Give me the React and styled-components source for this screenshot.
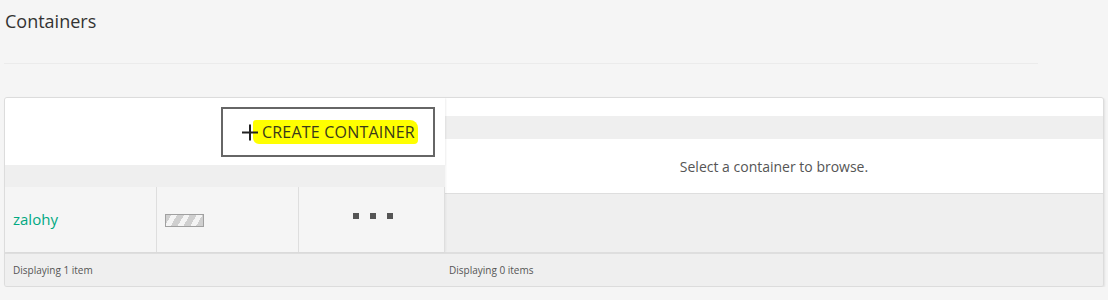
import React from "react";
import styled, { createGlobalStyle } from "styled-components";

const Global = createGlobalStyle`
  html, body {
    margin: 0;
    padding: 0;
    background: #f5f5f5;
    font-family: "Open Sans", "Noto Sans", sans-serif;
    color: #333;
  }
`;

const Page = styled.div`
  padding: 0 4px;
`;

const Title = styled.h1`
  margin: 0;
  padding: 9px 1px 0;
  height: 30px;
  font-size: 18px;
  font-weight: 400;
  color: #333;
`;

const Rule = styled.hr`
  margin: 24px 0 33px;
  width: 1034px;
  border: none;
  border-top: 1px solid #ebebeb;
`;

const Panel = styled.div`
  width: 1098px;
  border: 1px solid #dcdcdc;
  border-radius: 3px;
  background: #efefef;
  box-shadow: 1px 1px 2px rgba(0, 0, 0, 0.08);
  overflow: hidden;
`;

const Body = styled.div`
  display: flex;
`;

const Left = styled.div`
  width: 440px;
  display: flex;
  flex-direction: column;
  box-shadow: 1px 0 2px rgba(0, 0, 0, 0.05);
  z-index: 1;
`;

const Toolbar = styled.div`
  height: 67px;
  background: #fff;
  display: flex;
  justify-content: flex-end;
  align-items: flex-start;
  padding: 9px 10px 0 0;
  box-sizing: border-box;
  box-shadow: 0 1px 2px rgba(0, 0, 0, 0.06);
`;

const CreateButton = styled.button`
  width: 214px;
  height: 50px;
  border: 2px solid #666;
  background: #fff;
  display: flex;
  align-items: center;
  padding: 0 0 0 18px;
  box-sizing: border-box;
  font-family: inherit;
  cursor: pointer;
`;

const Plus = styled.svg`
  width: 18px;
  height: 18px;
  margin-right: -6px;
  position: relative;
  z-index: 1;
`;

const Marker = styled.span`
  background: #ffff00;
  border-radius: 3px 8px 4px 6px;
  padding: 4px 3px 4px 9px;
  font-size: 16px;
  line-height: 16px;
  letter-spacing: 0.2px;
  color: #3a3a1a;
`;

const Spacer = styled.div`
  height: ${(p) => p.$h}px;
  background: ${(p) => p.$bg || "#efefef"};
`;

const Row = styled.div`
  display: grid;
  grid-template-columns: 152px 142px 146px;
  height: 65px;
  background: #f5f5f5;
`;

const Cell = styled.div`
  display: flex;
  align-items: center;
  justify-content: ${(p) => p.$align || "flex-start"};
  padding: 0 8px;
  border-right: 1px solid #dedede;
  box-sizing: border-box;
`;

const NameLink = styled.a`
  color: #01a982;
  font-size: 15px;
  text-decoration: none;
  margin-top: -1px;
`;

const Bar = styled.div`
  width: 39px;
  height: 13px;
  margin-top: 2px;
  border: 1px solid #a0a0a0;
  box-sizing: border-box;
  background: repeating-linear-gradient(
    -60deg,
    #cfcfcf 0 6px,
    #f4f4f4 6px 11px
  );
`;

const Dots = styled.div`
  display: flex;
  gap: 11px;
  margin-top: -8px;
  margin-left: 3px;
  & > span {
    width: 6px;
    height: 6px;
    background: #555;
  }
`;

const Right = styled.div`
  flex: 1;
  display: flex;
  flex-direction: column;
`;

const Empty = styled.div`
  height: 54px;
  background: #fff;
  border-bottom: 1px solid #dedede;
  display: flex;
  align-items: center;
  justify-content: center;
  font-size: 14px;
  color: #555;
`;

const Footer = styled.div`
  display: flex;
  height: 32px;
  border-top: 2px solid #dedede;
  background: #efefef;
`;

const FooterCell = styled.div`
  width: ${(p) => p.$w || "auto"};
  flex: ${(p) => (p.$w ? "none" : 1)};
  box-sizing: border-box;
  display: flex;
  align-items: center;
  padding-left: ${(p) => p.$pl}px;
  font-size: 10px;
  color: #555;
`;

export default function App() {
  return (
    <Page>
      <Global />
      <Title>Containers</Title>
      <Rule />
      <Panel>
        <Body>
          <Left>
            <Toolbar>
              <CreateButton>
                <Plus viewBox="0 0 18 18">
                  <path d="M1 9.5h16M9 1.5v16" stroke="#222" strokeWidth="2" />
                </Plus>
                <Marker>CREATE CONTAINER</Marker>
              </CreateButton>
            </Toolbar>
            <Spacer $h={22} />
            <Row>
              <Cell>
                <NameLink href="#">zalohy</NameLink>
              </Cell>
              <Cell>
                <Bar />
              </Cell>
              <Cell $align="center">
                <Dots>
                  <span />
                  <span />
                  <span />
                </Dots>
              </Cell>
            </Row>
          </Left>
          <Right>
            <Spacer $h={18} $bg="#fff" />
            <Spacer $h={23} />
            <Empty>Select a container to browse.</Empty>
          </Right>
        </Body>
        <Footer>
          <FooterCell $w="440px" $pl={8}>
            Displaying 1 item
          </FooterCell>
          <FooterCell $pl={4}>Displaying 0 items</FooterCell>
        </Footer>
      </Panel>
    </Page>
  );
}
